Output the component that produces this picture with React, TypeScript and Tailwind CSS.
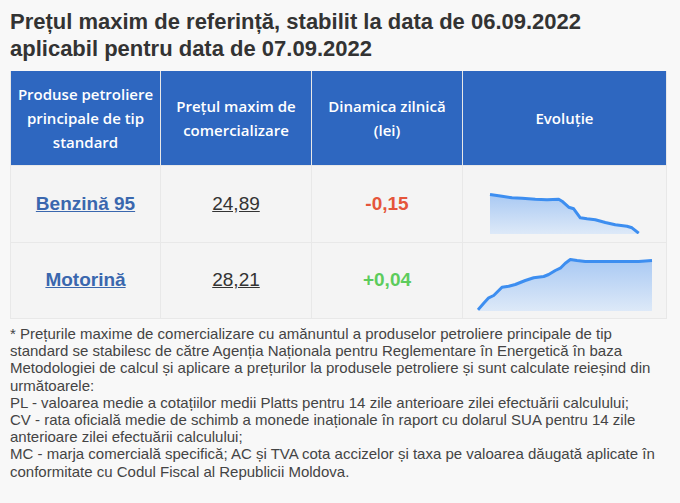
import React from "react";

const c1 = [
  [13, 20.5], [25, 22.2], [35, 23.8], [45, 24.2], [58.3, 25.2], [70, 25.8], [81.7, 25.2], [85, 27.2],
  [91.7, 33.2], [96.7, 34.8], [103.3, 43.8], [110, 44.8], [118.3, 45.8], [128.3, 48.5], [138.3, 50.8],
  [150, 52.2], [155, 53.8], [161.7, 59.2],
];
const c2 = [
  [1, 58.8], [6.7, 52.2], [11.7, 46.8], [16.7, 44.5], [25, 36.2], [31.7, 35.2], [38.3, 33.5], [48.3, 29.5],
  [56.7, 26.8], [66.7, 25.5], [71.7, 23.5], [78.3, 19.5], [83.3, 17.2], [88.3, 12.2], [93.3, 8.5],
  [100, 9.5], [108.3, 10.5], [161.7, 10.5], [175, 9.5],
];

function Spark({ pts, id }: { pts: number[][]; id: string }) {
  const line = pts.map((p, i) => `${i ? "L" : "M"}${p[0]} ${p[1]}`).join(" ");
  const first = pts[0];
  const last = pts[pts.length - 1];
  const area = `${line} L${last[0]} 60 L${first[0]} 60 Z`;
  return (
    <svg width="176" height="60" viewBox="0 0 176 60" className="block">
      <defs>
        <linearGradient id={id} x1="0" y1="0" x2="0" y2="1">
          <stop offset="0" stopColor="#a9c9f3" />
          <stop offset="1" stopColor="#dde9f8" />
        </linearGradient>
      </defs>
      <path d={area} fill={`url(#${id})`} />
      <path d={line} fill="none" stroke="#3d8ef0" strokeWidth="3" strokeLinejoin="round" />
    </svg>
  );
}

const headCell =
  "flex items-center justify-center text-center text-white font-semibold text-[15px] leading-[24px] px-1 bg-[#2e67c0]";
const bodyCell = "flex items-center justify-center bg-[#f4f4f4]";

export default function App() {
  return (
    <div className="min-h-[503px] w-[680px] bg-[#f8f8f8] px-[10px] pt-[8px] text-[#333]" style={{ fontFamily: '"Liberation Sans", Arial, sans-serif' }}>
      <h1 className="text-[22px] font-bold leading-[27px] text-[#333] w-[657px]">
        Prețul maxim de referință, stabilit la data de 06.09.2022 aplicabil pentru data de 07.09.2022
      </h1>
      <div className="mt-[9px] w-[657px] grid grid-cols-[149px_150px_150px_1fr] gap-px bg-[#e8e8e8] border-x border-b border-[#e8e8e8]">
        <div className={headCell} style={{ fontFamily: '"Open Sans", sans-serif' }}>
          Produse petroliere principale de tip standard
        </div>
        <div className={headCell + " h-[94px]"} style={{ fontFamily: '"Open Sans", sans-serif' }}>
          Prețul maxim de comercializare
        </div>
        <div className={headCell} style={{ fontFamily: '"Open Sans", sans-serif' }}>
          Dinamica zilnică (lei)
        </div>
        <div className={headCell} style={{ fontFamily: '"Open Sans", sans-serif' }}>
          Evoluție
        </div>

        <div className={bodyCell + " h-[76px]"}>
          <a className="text-[19px] font-bold text-[#3a67ae] underline">Benzină 95</a>
        </div>
        <div className={bodyCell}>
          <span className="text-[19px] text-[#333] underline">24,89</span>
        </div>
        <div className={bodyCell}>
          <span className="text-[19px] font-bold text-[#e5553a]">-0,15</span>
        </div>
        <div className={bodyCell}>
          <Spark pts={c1} id="g1" />
        </div>

        <div className={bodyCell + " h-[75px]"}>
          <a className="text-[19px] font-bold text-[#3a67ae] underline">Motorină</a>
        </div>
        <div className={bodyCell}>
          <span className="text-[19px] text-[#333] underline">28,21</span>
        </div>
        <div className={bodyCell}>
          <span className="text-[19px] font-bold text-[#5ccc5c]">+0,04</span>
        </div>
        <div className={bodyCell}>
          <Spark pts={c2} id="g2" />
        </div>
      </div>
      <p className="mt-[6px] w-[657px] text-[15px] leading-[17.2px] text-[#444]">
        * Prețurile maxime de comercializare cu amănuntul a produselor petroliere principale de tip standard se stabilesc de către Agenția Naționala pentru Reglementare în Energetică în baza Metodologiei de calcul și aplicare a prețurilor la produsele petroliere și sunt calculate reieșind din următoarele:
        <br />
        PL - valoarea medie a cotațiilor medii Platts pentru 14 zile anterioare zilei efectuării calculului;
        <br />
        CV - rata oficială medie de schimb a monede inaționale în raport cu dolarul SUA pentru 14 zile anterioare zilei efectuării calculului;
        <br />
        MC - marja comercială specifică; AC și TVA cota accizelor și taxa pe valoarea dăugată aplicate în conformitate cu Codul Fiscal al Republicii Moldova.
      </p>
    </div>
  );
}
